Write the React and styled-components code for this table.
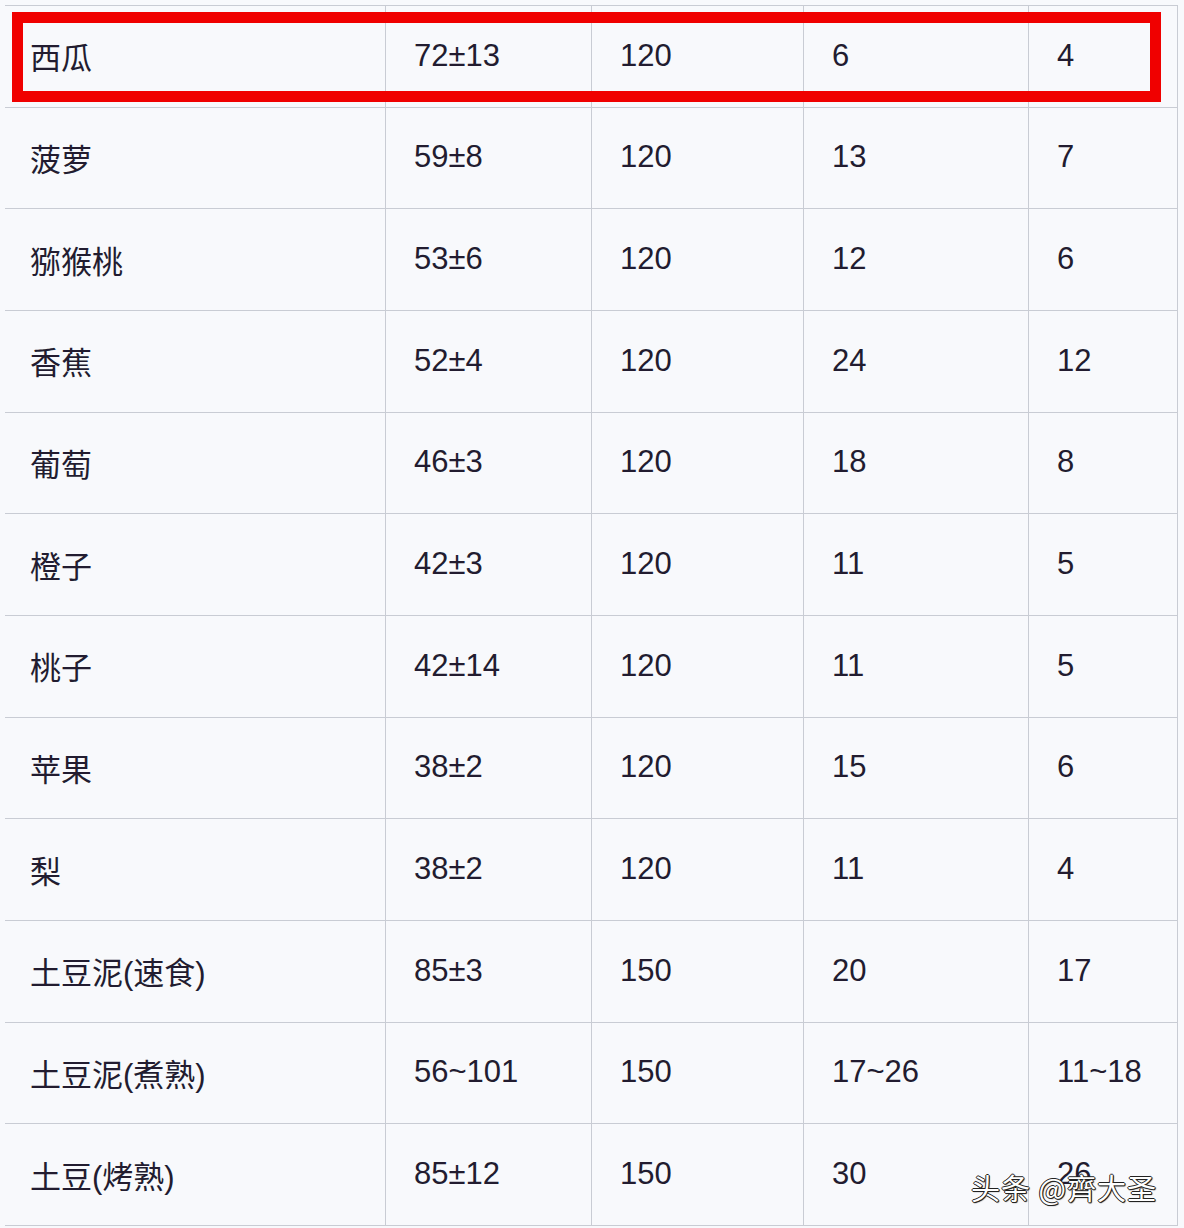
import React from "react";
import styled, { createGlobalStyle } from "styled-components";

const GlobalStyle = createGlobalStyle`
  html, body {
    margin: 0;
    padding: 0;
    background: #f8f9fc;
  }
  body {
    font-family: "Liberation Sans", "Noto Sans CJK SC", sans-serif;
  }
`;

const Page = styled.div`
  position: relative;
  width: 1184px;
  height: 1228px;
  overflow: hidden;
  background: #f8f9fc;
  padding: 5px 0 0 5px;
  box-sizing: border-box;
`;

const Table = styled.div`
  display: grid;
  grid-template-columns: 381px 206px 212px 225px 149px;
  grid-auto-rows: 101.67px;
  border-top: 1px solid #c9ccd4;
  width: 1173px;
`;

const Cell = styled.div`
  display: flex;
  align-items: center;
  box-sizing: border-box;
  padding: 0 0 1px ${(p) => (p.$first ? "25px" : "28px")};
  border-bottom: 1px solid #c9ccd4;
  border-right: 1px solid #c9ccd4;
  font-size: 31px;
  color: #221c30;
  white-space: nowrap;
`;

const Highlight = styled.div`
  position: absolute;
  left: 12px;
  top: 12px;
  width: 1149px;
  height: 90px;
  box-sizing: border-box;
  border: 11px solid #f00000;
  pointer-events: none;
`;

const Watermark = styled.div`
  position: absolute;
  left: 971px;
  top: 1166px;
  font-family: "Noto Sans CJK SC", sans-serif;
  font-size: 29px;
  letter-spacing: 1px;
  color: #ffffff;
  text-shadow: -1px 0 0 #222, 1px 0 0 #222, 0 -1px 0 #222, 0 1px 0 #222,
    1px 1px 1px #111;
`;

const rows = [
  ["西瓜", "72±13", "120", "6", "4"],
  ["菠萝", "59±8", "120", "13", "7"],
  ["猕猴桃", "53±6", "120", "12", "6"],
  ["香蕉", "52±4", "120", "24", "12"],
  ["葡萄", "46±3", "120", "18", "8"],
  ["橙子", "42±3", "120", "11", "5"],
  ["桃子", "42±14", "120", "11", "5"],
  ["苹果", "38±2", "120", "15", "6"],
  ["梨", "38±2", "120", "11", "4"],
  ["土豆泥(速食)", "85±3", "150", "20", "17"],
  ["土豆泥(煮熟)", "56~101", "150", "17~26", "11~18"],
  ["土豆(烤熟)", "85±12", "150", "30", "26"],
];

export default function App() {
  return (
    <>
      <GlobalStyle />
      <Page>
        <Table>
          {rows.map((row, i) =>
            row.map((v, j) => (
              <Cell key={`${i}-${j}`} $first={j === 0}>
                {v}
              </Cell>
            ))
          )}
        </Table>
        <Highlight />
        <Watermark>头条 @齊大圣</Watermark>
      </Page>
    </>
  );
}
